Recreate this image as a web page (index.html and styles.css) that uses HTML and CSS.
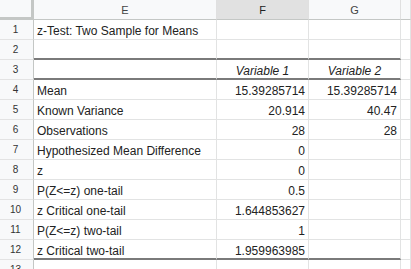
FILE: index.html
```html
<!DOCTYPE html>
<html>
<head>
<meta charset="utf-8">
<link rel="stylesheet" href="styles.css">
</head>
<body>
<div class="sheet">
  <div class="corner"></div>
  <div class="colhead">E</div>
  <div class="colhead sel">F</div>
  <div class="colhead">G</div>
  <div class="colhead"></div>

  <div class="rowhead">1</div>
  <div class="cell">z-Test: Two Sample for Means</div>
  <div class="cell"></div><div class="cell"></div><div class="cell"></div>

  <div class="rowhead">2</div>
  <div class="cell rule"></div><div class="cell rule"></div><div class="cell rule"></div><div class="cell"></div>

  <div class="rowhead">3</div>
  <div class="cell rule"></div>
  <div class="cell rule center it">Variable 1</div>
  <div class="cell rule center it">Variable 2</div>
  <div class="cell"></div>

  <div class="rowhead">4</div>
  <div class="cell">Mean</div>
  <div class="cell num">15.39285714</div>
  <div class="cell num">15.39285714</div>
  <div class="cell"></div>

  <div class="rowhead">5</div>
  <div class="cell">Known Variance</div>
  <div class="cell num">20.914</div>
  <div class="cell num">40.47</div>
  <div class="cell"></div>

  <div class="rowhead">6</div>
  <div class="cell">Observations</div>
  <div class="cell num">28</div>
  <div class="cell num">28</div>
  <div class="cell"></div>

  <div class="rowhead">7</div>
  <div class="cell">Hypothesized Mean Difference</div>
  <div class="cell num">0</div>
  <div class="cell"></div>
  <div class="cell"></div>

  <div class="rowhead">8</div>
  <div class="cell">z</div>
  <div class="cell num">0</div>
  <div class="cell"></div>
  <div class="cell"></div>

  <div class="rowhead">9</div>
  <div class="cell">P(Z&lt;=z) one-tail</div>
  <div class="cell num">0.5</div>
  <div class="cell"></div>
  <div class="cell"></div>

  <div class="rowhead">10</div>
  <div class="cell">z Critical one-tail</div>
  <div class="cell num">1.644853627</div>
  <div class="cell"></div>
  <div class="cell"></div>

  <div class="rowhead">11</div>
  <div class="cell">P(Z&lt;=z) two-tail</div>
  <div class="cell num">1</div>
  <div class="cell"></div>
  <div class="cell"></div>

  <div class="rowhead">12</div>
  <div class="cell rule">z Critical two-tail</div>
  <div class="cell num rule">1.959963985</div>
  <div class="cell rule"></div>
  <div class="cell"></div>

  <div class="rowhead">13</div>
  <div class="cell"></div><div class="cell"></div><div class="cell"></div><div class="cell"></div>
</div>
</body>
</html>
```

FILE: styles.css
```css
html, body {
  margin: 0;
  padding: 0;
  background: #ffffff;
  overflow: hidden;
}

.sheet {
  display: grid;
  grid-template-columns: 34px 183px 92px 92px 1fr;
  grid-auto-rows: 20px;
  width: 411px;
  font-family: "Liberation Sans", Arial, sans-serif;
  color: #222222;
}

.corner {
  background: #f8f9fa;
  border-right: 3px solid #c4c7c5;
  border-bottom: 3px solid #c4c7c5;
  box-sizing: border-box;
}

.colhead {
  background: #f8f9fa;
  border-right: 1px solid #e0e0e0;
  border-bottom: 1px solid #c4c7c5;
  box-sizing: border-box;
  font-size: 11px;
  color: #444444;
  display: flex;
  align-items: center;
  justify-content: center;
}

.colhead.sel {
  background: #e1e1e1;
  color: #222222;
}

.rowhead {
  background: #f8f9fa;
  border-right: 1px solid #c4c7c5;
  border-bottom: 1px solid #e3e3e3;
  box-sizing: border-box;
  font-size: 10px;
  color: #333333;
  display: flex;
  align-items: center;
  justify-content: center;
  padding-right: 2px;
}

.cell {
  border-right: 1px solid #e2e3e3;
  border-bottom: 1px solid #e2e3e3;
  box-sizing: border-box;
  font-size: 12px;
  line-height: 14px;
  padding: 0 3px 1px 3px;
  white-space: nowrap;
  overflow: hidden;
  display: flex;
  align-items: flex-end;
}

.cell.num {
  justify-content: flex-end;
}

.cell.center {
  justify-content: center;
}

.cell.it {
  font-style: italic;
}

.cell.rule {
  border-bottom: 2px solid #7a7a7a;
  padding-bottom: 0;
}
```
